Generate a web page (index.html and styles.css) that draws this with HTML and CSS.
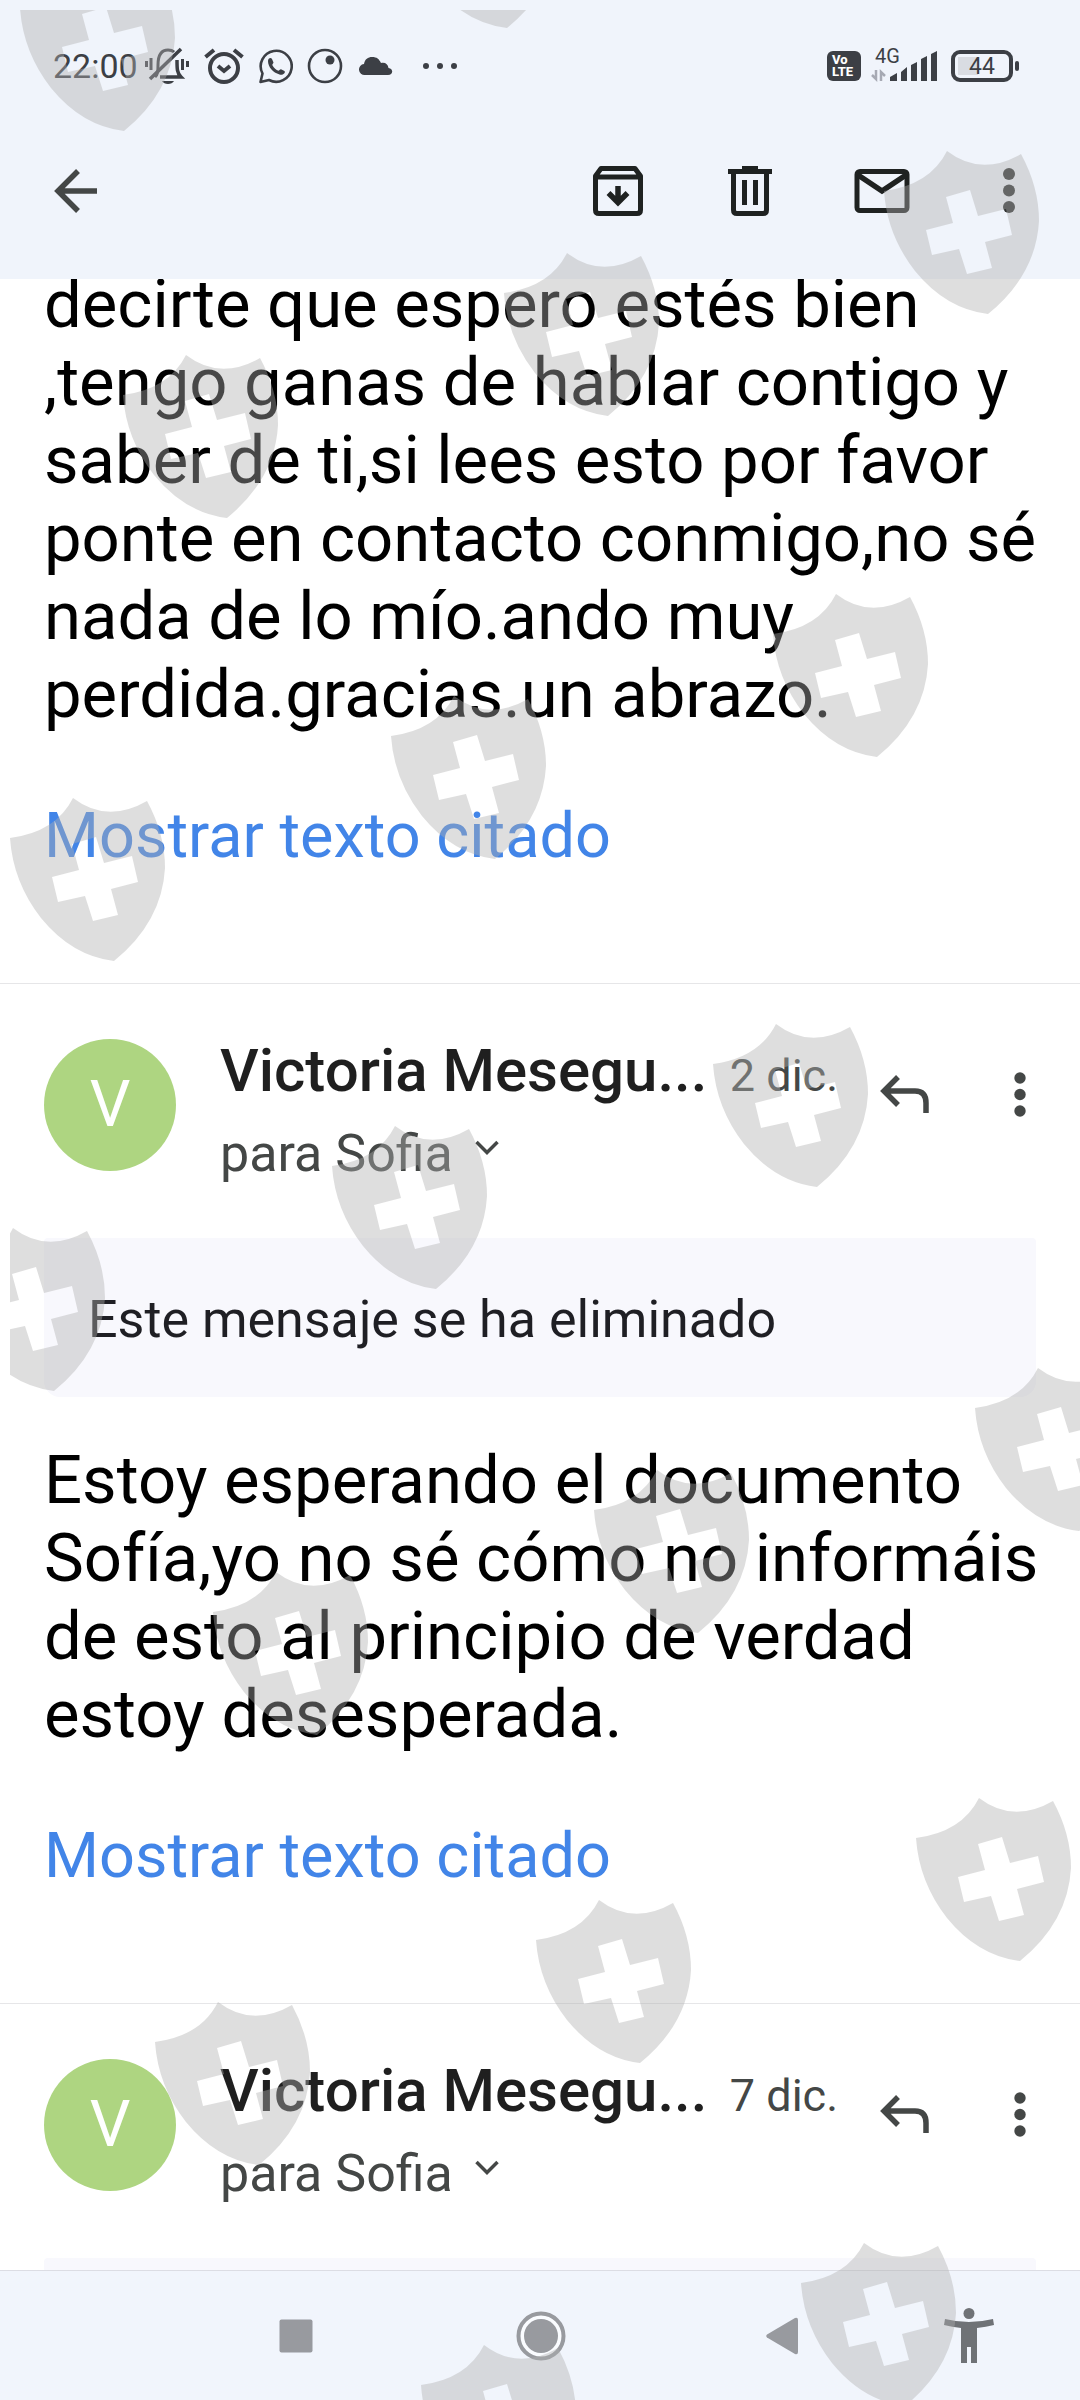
FILE: index.html
```html
<!DOCTYPE html>
<html lang="es">
<head>
<meta charset="utf-8">
<meta name="viewport" content="width=device-width, initial-scale=1">
<title>Correo</title>
<link rel="stylesheet" href="styles.css">
</head>
<body>
<div class="screen">
  <header class="top">
    <div class="status">
      <span class="clock">22:00</span>
      <svg class="bell" width="44" height="38" viewBox="0 0 44 38" fill="none" stroke="currentColor" stroke-width="3">
        <path d="M10 30C13 27 13 24 13 18C13 8 16 3 23 3C26 3 28 4 29 5"/>
        <path d="M32 13C32 22 32 26 36 30H15" stroke-width="3.5"/>
        <path d="M5 32L36 2" stroke-width="3.5"/>
        <path d="M1.500 14V20M6 11V23M37.500 12V23M42.500 14V20"/>
        <path d="M17 34H29C27 38 19 38 17 34Z" fill="currentColor" stroke="none"/>
      </svg>
      <svg class="alarm" width="40" height="36" viewBox="0 0 40 36" fill="none" stroke="currentColor">
        <circle cx="20" cy="20" r="14" stroke-width="4"/>
        <path d="M14 18L20 23L26 18" stroke-width="4"/>
        <path d="M1.500 9L10 2M38.500 9L30 2" stroke-width="4"/>
      </svg>
      <svg class="chat" width="34" height="36" viewBox="0 0 34 36" fill="none" stroke="currentColor" stroke-width="2.600">
        <path d="M1.500 34L3.500 25.500A15.500 15.500 0 1 1 10 32Z" stroke-linejoin="round"/>
        <path d="M9 13C9 10 12 9 13 11L14.500 14.500C14 16 13 16 13.500 17.500C15 20 17 22 19.500 22.800C21 22 21 21 22.500 21.500L25.500 23C27 25 23.500 27.500 20.500 26.500C14 24.500 9 19 9 13Z" fill="currentColor" stroke="none"/>
      </svg>
      <svg class="ring" width="36" height="36" viewBox="0 0 36 36" fill="none" stroke="currentColor" stroke-width="2.600">
        <circle cx="18" cy="18" r="16"/>
        <circle cx="23" cy="12" r="4.500" fill="currentColor" stroke="none"/>
      </svg>
      <svg class="cloud" width="34" height="20" viewBox="0 0 34 20" fill="currentColor">
        <path d="M6 19A5.500 5.500 0 0 1 5 8C6 3 9 1 13 1C18 1 20 3 22 7C26 6 29 8 29.500 12C35 13 34 19 29 19Z"/>
      </svg>
      <svg class="more-status" width="34" height="8" viewBox="0 0 34 8" fill="currentColor">
        <circle cx="3" cy="4" r="3"/><circle cx="17" cy="4" r="3"/><circle cx="31" cy="4" r="3"/>
      </svg>
      <span class="volte"><span>Vo</span><span>LTE</span></span>
      <span class="signal">
        <span class="net">4G</span>
        <svg width="66" height="32" viewBox="0 0 66 32" fill="currentColor">
          <path d="M19 31V27L26 23V31ZM30 31V22L36 17V31ZM40 31V15L46 12V31ZM50 31V9L56 6V31ZM60 31V4L66 1V31Z"/>
          <path d="M5 20V29L1 25M10 31V22L14 26" fill="none" stroke="#a6a9b3" stroke-width="2.500"/>
        </svg>
      </span>
      <span class="battery">44</span>
    </div>
    <div class="toolbar">
      <button class="tool back" aria-label="Atrás">
        <svg width="44" height="44" viewBox="0 0 44 44" fill="none" stroke="#444746" stroke-width="5.500"><path d="M43 22H4M24 2L4 22L24 42"/></svg>
      </button>
      <button class="tool" aria-label="Archivar">
        <svg width="50" height="50" viewBox="0 0 50 50" fill="none" stroke="#1f2221" stroke-width="5">
          <path d="M2.500 10L8 2.500H42L47.500 10V44Q47.500 47.500 44 47.500H6Q2.500 47.500 2.500 44ZM3 11H47" stroke-linejoin="round"/>
          <path d="M25 20V35M15.500 27L25 36.500L34.500 27" stroke-width="5.500"/>
        </svg>
      </button>
      <button class="tool" aria-label="Eliminar">
        <svg width="44" height="50" viewBox="0 0 44 50" fill="none" stroke="#1f2221" stroke-width="5">
          <path d="M0 5.500H44M14 2.500H30M5.500 6V44Q5.500 47.500 9 47.500H35Q38.500 47.500 38.500 44V6M16.500 14V39M27.500 14V39"/>
        </svg>
      </button>
      <button class="tool" aria-label="Marcar como no leído">
        <svg width="56" height="44" viewBox="0 0 56 44" fill="none" stroke="#1f2221" stroke-width="5">
          <rect x="3" y="2.500" width="50" height="39" rx="3"/>
          <path d="M4 6L28 22L52 6" stroke-width="5.500"/>
        </svg>
      </button>
      <button class="tool last" aria-label="Más opciones">
        <svg width="12" height="45" viewBox="0 0 12 45" fill="#2f3130"><circle cx="6" cy="6" r="6"/><circle cx="6" cy="22.500" r="6"/><circle cx="6" cy="39" r="6"/></svg>
      </button>
    </div>
  </header>

  <main class="thread">
    <article class="message scrolled">
      <p class="body">decirte que espero estés bien<br>,tengo ganas de hablar contigo y<br>saber de ti,si lees esto por favor<br>ponte en contacto conmigo,no sé<br>nada de lo mío.ando muy<br>perdida.gracias.un abrazo.</p>
      <a class="quoted" href="#">Mostrar texto citado</a>
    </article>

    <article class="message">
      <div class="head">
        <span class="avatar">V</span>
        <div class="who">
          <div class="line"><span class="name">Victoria Mesegu...</span><span class="date">2 dic.</span></div>
          <button class="to">para Sofia
            <svg width="24" height="28" viewBox="0 0 24 28" fill="none" stroke="#444746" stroke-width="3.500"><path d="M1.500 2L12 12.500L22.500 2"/></svg>
          </button>
        </div>
        <button class="act reply" aria-label="Responder">
          <svg width="50" height="38" viewBox="0 0 50 38" fill="none" stroke="#444746" stroke-width="5.500"><path d="M18 2L4 16L18 30M4 16H35Q46 16 46 28V38"/></svg>
        </button>
        <button class="act" aria-label="Más opciones del mensaje">
          <svg width="12" height="45" viewBox="0 0 12 45" fill="#444746"><circle cx="6" cy="6" r="5.700"/><circle cx="6" cy="22.500" r="5.700"/><circle cx="6" cy="39" r="5.700"/></svg>
        </button>
      </div>
      <p class="notice">Este mensaje se ha eliminado</p>
      <p class="body">Estoy esperando el documento<br>Sofía,yo no sé cómo no informáis<br>de esto al principio de verdad<br>estoy desesperada.</p>
      <a class="quoted" href="#">Mostrar texto citado</a>
    </article>

    <article class="message">
      <div class="head">
        <span class="avatar">V</span>
        <div class="who">
          <div class="line"><span class="name">Victoria Mesegu...</span><span class="date">7 dic.</span></div>
          <button class="to">para Sofia
            <svg width="24" height="28" viewBox="0 0 24 28" fill="none" stroke="#444746" stroke-width="3.500"><path d="M1.500 2L12 12.500L22.500 2"/></svg>
          </button>
        </div>
        <button class="act reply" aria-label="Responder">
          <svg width="50" height="38" viewBox="0 0 50 38" fill="none" stroke="#444746" stroke-width="5.500"><path d="M18 2L4 16L18 30M4 16H35Q46 16 46 28V38"/></svg>
        </button>
        <button class="act" aria-label="Más opciones del mensaje">
          <svg width="12" height="45" viewBox="0 0 12 45" fill="#444746"><circle cx="6" cy="6" r="5.700"/><circle cx="6" cy="22.500" r="5.700"/><circle cx="6" cy="39" r="5.700"/></svg>
        </button>
      </div>
      <div class="peek"></div>
    </article>
  </main>

  <nav class="navbar">
    <button aria-label="Recientes"><svg width="34" height="34" viewBox="0 0 34 34" fill="#989a9f"><rect width="33" height="33" x=".5" y=".5" rx="2"/></svg></button>
    <button aria-label="Inicio"><svg width="50" height="50" viewBox="0 0 50 50"><circle cx="25" cy="25" r="22.500" fill="#fafcff" stroke="#989a9f" stroke-width="4"/><circle cx="25" cy="25" r="17" fill="#989a9f"/></svg></button>
    <button aria-label="Volver"><svg width="32" height="38" viewBox="0 0 32 38" fill="#989a9f"><path d="M1 17.500L29 1Q32 0 32 3V35Q32 38 29 37L1 20.500Q-.5 19 1 17.500Z"/></svg></button>
    <button aria-label="Accesibilidad"><svg width="50" height="56" viewBox="0 0 50 56" fill="#6f7276"><circle cx="25" cy="5.500" r="5.500"/><path d="M1 11Q25 17 49 11L50 17Q42 19 33 20V55H27V39H23V55H17V20Q8 19 0 17Z"/></svg></button>
  </nav>

  <svg class="shields" aria-hidden="true">
    <defs>
      <path id="shield" fill-rule="evenodd" d="M0 40Q46 34 63 0Q97 26 137 3Q155 36 155 70Q152 124 104 163Q62 158 31 120Q3 84 0 40ZM62 46L69 72L42 79L48 104L75 98L83 123L108 117L101 91L128 84L122 58L94 65L86 39Z"/>
    </defs>
    <use href="#shield" x="10" y="-42"/>
    <use href="#shield" x="393" y="-145"/>
    <use href="#shield" x="874" y="141"/>
    <use href="#shield" x="494" y="243"/>
    <use href="#shield" x="113" y="345"/>
    <use href="#shield" x="763" y="584"/>
    <use href="#shield" x="381" y="686"/>
    <use href="#shield" x="0" y="788"/>
    <use href="#shield" x="703" y="1014"/>
    <use href="#shield" x="322" y="1116"/>
    <use href="#shield" x="-60" y="1218"/>
    <use href="#shield" x="965" y="1358"/>
    <use href="#shield" x="584" y="1460"/>
    <use href="#shield" x="203" y="1562"/>
    <use href="#shield" x="906" y="1788"/>
    <use href="#shield" x="526" y="1890"/>
    <use href="#shield" x="145" y="1992"/>
    <use href="#shield" x="791" y="2233"/>
    <use href="#shield" x="411" y="2335"/>
  </svg>
</div>
</body>
</html>
```

FILE: styles.css
```css
* { box-sizing: border-box; }

body {
  margin: 0;
  background: #fff;
  color: #000;
  font-family: Roboto, "Liberation Sans", sans-serif;
}

button {
  padding: 0;
  border: 0;
  background: none;
  color: inherit;
  font: inherit;
}

svg { display: block; flex: none; }

.screen {
  position: relative;
  display: flex;
  flex-direction: column;
  height: 100vh;
  overflow: hidden;
}

/* Status bar and toolbar */
.top { flex: none; background: #f0f4fb; }

.status {
  display: flex;
  align-items: center;
  height: 102px;
  padding: 30px 67px 0 53px;
  color: #3c3f45;
}

.clock { font-size: 34px; line-height: 40px; }
.bell { margin-left: 7px; }
.alarm { margin-left: 15px; }
.chat { margin-left: 15px; }
.ring { margin-left: 14px; }
.cloud { margin-left: 16px; }
.more-status { margin-left: 30px; }

.volte {
  display: flex;
  flex-direction: column;
  align-items: flex-start;
  width: 34px;
  margin-left: auto;
  padding: 3px 5px;
  border-radius: 6px;
  background: #3c3f45;
  color: #fff;
  font-size: 13px;
  font-weight: 800;
  line-height: 12px;
}

.signal { position: relative; margin-left: 10px; }
.net { position: absolute; top: -4px; left: 4px; font-size: 20px; line-height: 20px; }

.battery {
  position: relative;
  width: 62px;
  height: 32px;
  margin-left: 14px;
  border: 4px solid #3c3f45;
  border-radius: 9px;
  background: linear-gradient(#d9dce2, #d9dce2) 3px 3px / 20px 18px no-repeat;
  font-size: 23px;
  line-height: 25px;
  text-align: center;
}

.battery::after {
  content: "";
  position: absolute;
  top: 7px;
  right: -10px;
  width: 4px;
  height: 10px;
  border-radius: 2px;
  background: #3c3f45;
}

.toolbar {
  display: flex;
  height: 177px;
  padding-right: 10px;
}

.tool {
  display: flex;
  align-items: center;
  justify-content: center;
  width: 132px;
}

.back { width: 152px; margin-right: auto; }
.last { width: 122px; }

/* Conversation */
.thread { flex: 1; min-height: 0; overflow: hidden; }

.message {
  padding: 55px 44px 111px;
  border-top: 1px solid #e6e6e8;
}

.scrolled { margin-top: -14px; padding-top: 0; border-top: 0; }

.body {
  margin: 0;
  font-size: 67px;
  line-height: 78px;
  white-space: nowrap;
}

.quoted {
  display: block;
  margin-top: 67px;
  color: #4285e8;
  font-size: 63px;
  line-height: 72px;
  text-decoration: none;
}

.head { display: flex; height: 148px; }

.avatar {
  flex: none;
  width: 132px;
  height: 132px;
  border-radius: 50%;
  background: #aed581;
  color: #fff;
  font-size: 64px;
  line-height: 132px;
  text-align: center;
}

.who { flex: 1; margin-left: 44px; color: #444746; white-space: nowrap; }

.line {
  display: flex;
  align-items: baseline;
  justify-content: space-between;
  height: 64px;
  line-height: 64px;
}

.name { color: #1f1f1f; font-size: 60px; font-weight: 500; }
.date { font-size: 45px; }

.to {
  display: flex;
  align-items: center;
  gap: 22px;
  margin-top: 19px;
  font-size: 52px;
  line-height: 64px;
}

.act {
  display: flex;
  justify-content: center;
  width: 32px;
  height: 110px;
  padding-top: 33px;
}

.reply { width: 50px; margin: 0 74px 0 42px; padding-top: 36px; }

.notice {
  margin: 51px 0 44px;
  padding: 50px 44px 45px;
  border-radius: 4px 4px 16px 16px;
  background: #f8f8fd;
  color: #1f1f24;
  font-size: 52px;
  line-height: 64px;
}

.peek {
  height: 160px;
  margin-top: 51px;
  border-radius: 4px;
  background: #f8f8fd;
}

/* System navigation */
.navbar {
  display: grid;
  flex: none;
  grid-template-columns: 245fr 245fr 238fr 136fr;
  height: 130px;
  padding: 0 43px 0 173px;
  border-top: 1px solid #dcdde4;
  background: #f1f5fc;
}

.navbar button { display: flex; align-items: center; justify-content: center; }

/* Shield overlay */
.shields {
  position: absolute;
  top: 10px;
  left: 10px;
  width: calc(100% - 10px);
  height: calc(100% - 10px);
  overflow: hidden;
  fill: #b0b0b0;
  opacity: .41;
  pointer-events: none;
}
```
